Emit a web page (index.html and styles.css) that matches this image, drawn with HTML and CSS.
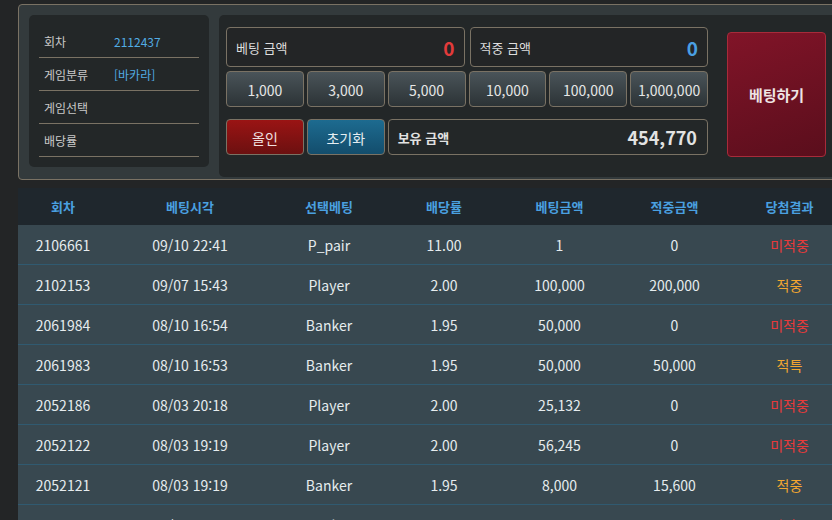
FILE: index.html
```html
<!DOCTYPE html>
<html lang="ko">
<head>
  <meta charset="UTF-8">
  <meta name="viewport" content="width=device-width, initial-scale=1.0">
  <title>베팅</title>
  <link rel="stylesheet" href="styles.css">
</head>
<body>
  <div class="wrap">
    <!-- Bet panel -->
    <div class="bet-panel">
      <div class="info-box">
        <div class="info-row"><span class="info-label">회차</span><span class="info-value">2112437</span></div>
        <div class="info-row"><span class="info-label">게임분류</span><span class="info-value">[바카라]</span></div>
        <div class="info-row"><span class="info-label">게임선택</span><span class="info-value"></span></div>
        <div class="info-row"><span class="info-label">배당률</span><span class="info-value"></span></div>
      </div>

      <div class="bet-box">
        <div class="bet-controls">
          <div class="amount-row">
            <div class="amount-field">
              <span class="amount-label">베팅 금액</span>
              <span class="amount-value red">0</span>
            </div>
            <div class="amount-field">
              <span class="amount-label">적중 금액</span>
              <span class="amount-value blue">0</span>
            </div>
          </div>
          <div class="chip-grid">
            <button class="chip-btn">1,000</button>
            <button class="chip-btn">3,000</button>
            <button class="chip-btn">5,000</button>
            <button class="chip-btn">10,000</button>
            <button class="chip-btn">100,000</button>
            <button class="chip-btn">1,000,000</button>
          </div>
          <div class="action-grid">
            <button class="action-btn allin">올인</button>
            <button class="action-btn reset">초기화</button>
            <div class="balance-field">
              <span class="balance-label">보유 금액</span>
              <span class="balance-value">454,770</span>
            </div>
          </div>
        </div>
        <button class="submit-btn">베팅하기</button>
      </div>
    </div>

    <!-- History -->
    <table class="history">
      <colgroup>
        <col style="width: 90px">
        <col style="width: 164px">
        <col style="width: 114px">
        <col style="width: 116px">
        <col style="width: 115px">
        <col style="width: 115px">
        <col style="width: 115px">
      </colgroup>
      <thead>
        <tr>
          <th>회차</th>
          <th>베팅시각</th>
          <th>선택베팅</th>
          <th>배당률</th>
          <th>베팅금액</th>
          <th>적중금액</th>
          <th>당첨결과</th>
        </tr>
      </thead>
      <tbody>
        <tr><td>2106661</td><td>09/10 22:41</td><td>P_pair</td><td>11.00</td><td>1</td><td>0</td><td class="lose">미적중</td></tr>
        <tr><td>2102153</td><td>09/07 15:43</td><td>Player</td><td>2.00</td><td>100,000</td><td>200,000</td><td class="win">적중</td></tr>
        <tr><td>2061984</td><td>08/10 16:54</td><td>Banker</td><td>1.95</td><td>50,000</td><td>0</td><td class="lose">미적중</td></tr>
        <tr><td>2061983</td><td>08/10 16:53</td><td>Banker</td><td>1.95</td><td>50,000</td><td>50,000</td><td class="win">적특</td></tr>
        <tr><td>2052186</td><td>08/03 20:18</td><td>Player</td><td>2.00</td><td>25,132</td><td>0</td><td class="lose">미적중</td></tr>
        <tr><td>2052122</td><td>08/03 19:19</td><td>Player</td><td>2.00</td><td>56,245</td><td>0</td><td class="lose">미적중</td></tr>
        <tr><td>2052121</td><td>08/03 19:19</td><td>Banker</td><td>1.95</td><td>8,000</td><td>15,600</td><td class="win">적중</td></tr>
        <tr><td>2052120</td><td>08/03 19:18</td><td>Banker</td><td>1.95</td><td>10,000</td><td>0</td><td class="lose">미적중</td></tr>
      </tbody>
    </table>
  </div>
</body>
</html>
```

FILE: styles.css
```css
html, body {
  overflow: hidden;
}
body {
  margin: 0;
  background: #232526;
  font-family: "Noto Sans CJK KR", "Noto Sans", sans-serif;
  color: #e4e8ea;
}

.wrap {
  width: 829px;
  padding: 4px 0 0 18px;
}

/* Bet panel */
.bet-panel {
  display: flex;
  align-items: flex-start;
  gap: 10px;
  padding: 10px 0 2px 10px;
  background: #333a3c;
  border: 1px solid #7a7264;
  border-radius: 4px;
}

.info-box {
  width: 160px;
  padding: 10px;
  background: #232728;
  border-radius: 5px;
}
.info-row {
  display: flex;
  align-items: center;
  height: 32px;
  padding-left: 5px;
  border-bottom: 1px solid #7a7264;
  font-size: 12px;
}
.info-label {
  width: 70px;
  color: #c9c9c9;
}
.info-value {
  color: #52ace4;
}

.bet-box {
  flex: 1;
  display: flex;
  align-items: flex-start;
  padding: 12px 0 20px 7px;
  background: #232728;
  border-radius: 5px;
}
.bet-controls {
  width: 482px;
}
.amount-row {
  display: flex;
  gap: 5px;
}
.amount-field {
  flex: 1;
  display: flex;
  justify-content: space-between;
  align-items: center;
  height: 38px;
  padding: 0 9px 0 9px;
  border: 1px solid #7a7264;
  border-radius: 4px;
  background: #232526;
}
.amount-label {
  font-size: 13px;
  color: #dedede;
}
.amount-value {
  font-size: 19px;
  font-weight: bold;
}
.amount-value.red { color: #e23b3b; }
.amount-value.blue { color: #4a9fe2; }

.chip-grid,
.action-grid {
  display: grid;
  grid-template-columns: repeat(6, 1fr);
  gap: 3px;
  margin-top: 4px;
}
.action-grid {
  margin-top: 12px;
}
.chip-btn,
.action-btn {
  height: 36px;
  border: 1px solid #7a7264;
  border-radius: 4px;
  font-family: inherit;
  font-size: 14px;
  color: #e6e6e6;
  padding: 1px 0 0;
}
.chip-btn {
  background: linear-gradient(#4a5459, #2c3336);
}
.action-btn.allin {
  background: linear-gradient(#9a1414, #6c1010);
  color: #f0e0e0;
}
.action-btn.reset {
  background: linear-gradient(#1d6b90, #134d6c);
  color: #e6eef2;
}
.balance-field {
  grid-column: span 4;
  display: flex;
  justify-content: space-between;
  align-items: center;
  height: 34px;
  padding: 0 10px 0 9px;
  border: 1px solid #7a7264;
  border-radius: 4px;
}
.balance-label {
  font-size: 13px;
  font-weight: bold;
  color: #e2e2e2;
}
.balance-value {
  font-size: 18px;
  font-weight: bold;
  color: #e2e2e2;
}

.submit-btn {
  width: 99px;
  height: 125px;
  margin: 5px 0 0 19px;
  background: linear-gradient(160deg, #811428, #5a0e1c);
  border: 1px solid #a82b3a;
  border-radius: 4px;
  font-family: inherit;
  font-size: 15px;
  font-weight: bold;
  color: #eee4e4;
}

/* History table */
.history {
  width: 829px;
  margin-top: 8px;
  border-collapse: collapse;
  table-layout: fixed;
}
.history th {
  height: 37px;
  padding: 0;
  background: #1f272d;
  color: #4aa0e0;
  font-size: 13px;
  font-weight: bold;
  text-align: center;
}
.history td {
  height: 39px;
  padding: 0;
  background: #384850;
  border-top: 1px solid #305a70;
  font-size: 14px;
  color: #e6ecee;
  text-align: center;
}
.history tbody tr:first-child td {
  border-top: none;
}
.history td.lose { color: #e83a3a; }
.history td.win { color: #f2a531; }
```
